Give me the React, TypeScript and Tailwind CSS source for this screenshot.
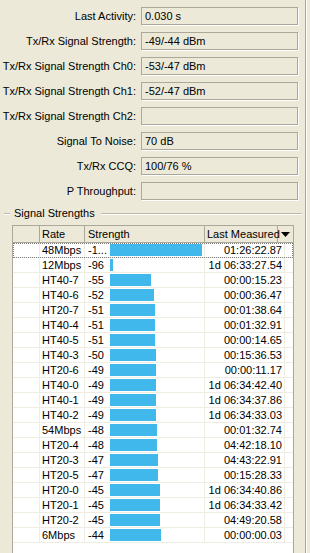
import type { ReactNode } from "react";

interface Field {
  label: string;
  value: string;
}

interface RateRow {
  rate: string;
  strength: string;
  bar: number;
  measured: string;
}

const FIELDS: Field[] = [
  { label: "Last Activity:", value: "0.030 s" },
  { label: "Tx/Rx Signal Strength:", value: "-49/-44 dBm" },
  { label: "Tx/Rx Signal Strength Ch0:", value: "-53/-47 dBm" },
  { label: "Tx/Rx Signal Strength Ch1:", value: "-52/-47 dBm" },
  { label: "Tx/Rx Signal Strength Ch2:", value: "" },
  { label: "Signal To Noise:", value: "70 dB" },
  { label: "Tx/Rx CCQ:", value: "100/76 %" },
  { label: "P Throughput:", value: "" },
];

const ROWS: RateRow[] = [
  { rate: "48Mbps", strength: "-1...", bar: 92, measured: "01:26:22.87" },
  { rate: "12Mbps", strength: "-96", bar: 3, measured: "1d 06:33:27.54" },
  { rate: "HT40-7", strength: "-55", bar: 41, measured: "00:00:15.23" },
  { rate: "HT40-6", strength: "-52", bar: 44, measured: "00:00:36.47" },
  { rate: "HT20-7", strength: "-51", bar: 45, measured: "00:01:38.64" },
  { rate: "HT40-4", strength: "-51", bar: 45, measured: "00:01:32.91" },
  { rate: "HT40-5", strength: "-51", bar: 45, measured: "00:00:14.65" },
  { rate: "HT40-3", strength: "-50", bar: 46, measured: "00:15:36.53" },
  { rate: "HT20-6", strength: "-49", bar: 46, measured: "00:00:11.17" },
  { rate: "HT40-0", strength: "-49", bar: 46, measured: "1d 06:34:42.40" },
  { rate: "HT40-1", strength: "-49", bar: 46, measured: "1d 06:34:37.86" },
  { rate: "HT40-2", strength: "-49", bar: 46, measured: "1d 06:34:33.03" },
  { rate: "54Mbps", strength: "-48", bar: 47, measured: "00:01:32.74" },
  { rate: "HT20-4", strength: "-48", bar: 47, measured: "04:42:18.10" },
  { rate: "HT20-3", strength: "-47", bar: 48, measured: "04:43:22.91" },
  { rate: "HT20-5", strength: "-47", bar: 48, measured: "00:15:28.33" },
  { rate: "HT20-0", strength: "-45", bar: 50, measured: "1d 06:34:40.86" },
  { rate: "HT20-1", strength: "-45", bar: 50, measured: "1d 06:34:33.42" },
  { rate: "HT20-2", strength: "-45", bar: 50, measured: "04:49:20.58" },
  { rate: "6Mbps", strength: "-44", bar: 51, measured: "00:00:00.03" },
];

function FieldRow({ label, value }: Field) {
  return (
    <div className="flex h-[18px] items-center">
      <div className="w-[136px] whitespace-nowrap text-right">{label}</div>
      <div className="ml-[5px] h-[18px] w-[157px] border border-[#aca899] pl-[3px] leading-[16px] shadow-[1px_1px_0_#ffffff]">
        {value}
      </div>
    </div>
  );
}

function HeaderCell({ className, children }: { className: string; children?: ReactNode }) {
  return (
    <div className={`flex h-full items-center border-r border-[#aca899] ${className}`}>
      {children}
    </div>
  );
}

export default function App() {
  return (
    <div
      className="flex h-[553px] w-[310px] overflow-hidden bg-[#ece9d8] text-[11px] text-black"
      style={{ fontFamily: '"Liberation Sans", Arial, sans-serif' }}
    >
      <div className="flex w-[305px] flex-col">
        <div className="flex flex-col gap-[7px] pt-[7px]">
          {FIELDS.map((f) => (
            <FieldRow key={f.label} {...f} />
          ))}
        </div>

        {/* group box caption */}
        <div className="mt-[6px] flex h-[15px] items-center">
          <div className="ml-[4px] w-[6px] border-t border-b border-t-[#bcb9a8] border-b-white" />
          <span className="mx-[4px] whitespace-nowrap leading-[15px]">Signal Strengths</span>
          <div className="ml-[2px] w-[201px] border-t border-b border-t-[#bcb9a8] border-b-white" />
        </div>

        <div className="ml-[12px] mt-[4px] flex w-[282px] flex-1 flex-col border-x border-t border-[#aca899] bg-white">
          <div className="flex h-[17px] shrink-0 border-b border-[#aca899] bg-[#ece9d8]">
            <HeaderCell className="w-[27px]" />
            <HeaderCell className="w-[45px] pl-[2px]">Rate</HeaderCell>
            <HeaderCell className="w-[120px] pl-[3px]">Strength</HeaderCell>
            <HeaderCell className="w-[73px] whitespace-nowrap pl-[2px]">Last Measured</HeaderCell>
            <div className="flex h-full flex-1 items-center justify-center">
              <svg width="9" height="5" viewBox="0 0 9 5">
                <polygon points="0,0 9,0 4.5,5" fill="#000000" />
              </svg>
            </div>
          </div>

          {ROWS.map((r, i) => (
            <div
              key={r.rate}
              className={`flex h-[15px] shrink-0 border-b border-[#efede1] leading-[14px] ${
                i === 0 ? "outline-1 -outline-offset-1 outline-[#808080] outline-dotted" : ""
              }`}
            >
              <div className="w-[27px] border-r border-[#efede1]" />
              <div className="w-[45px] border-r border-[#efede1] pl-[2px]">{r.rate}</div>
              <div className="flex w-[120px] items-center border-r border-[#efede1] pl-[3px]">
                <span className="w-[22px] whitespace-nowrap">{r.strength}</span>
                <div className="h-[12px] bg-[#40b8ec]" style={{ width: r.bar }} />
              </div>
              <div className="w-[80px] whitespace-nowrap border-r border-[#efede1] pr-[2px] text-right">
                {r.measured}
              </div>
              <div className="flex-1" />
            </div>
          ))}
          <div className="flex-1" />
        </div>
      </div>
      <div className="w-px bg-[#aca899]" />
      <div className="w-[4px] border-l border-white" />
    </div>
  );
}
